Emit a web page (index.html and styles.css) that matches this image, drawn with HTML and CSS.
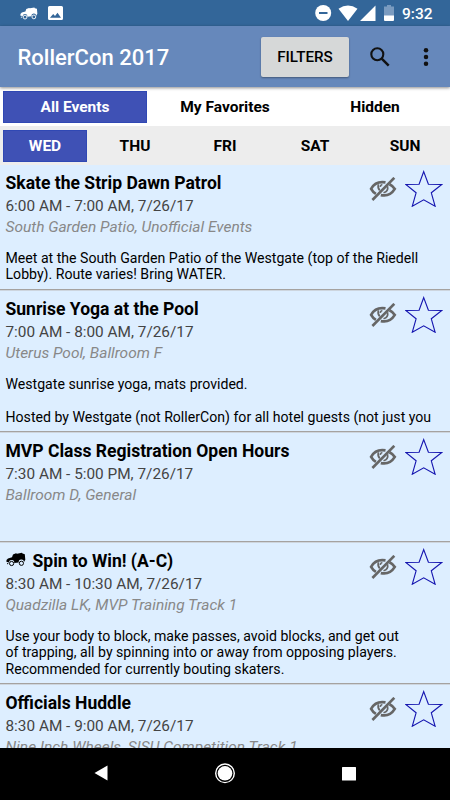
FILE: index.html
```
<!DOCTYPE html>
<html lang="en">
<head>
<meta charset="utf-8">
<title>RollerCon 2017</title>
<link rel="stylesheet" href="styles.css">
</head>
<body>
<svg class="defs" aria-hidden="true">
  <symbol id="skate" viewBox="0 0 20 14">
    <path fill="currentColor" d="M7 2 10 .8l1 .5 5-1 .5.8 2.300.7.5 5.500-1.300 2.200A2.600 2.600 0 0 0 12.700 10l-4.500.6A2.600 2.600 0 0 0 3 9.800L.5 9.500.5 7.500 2 6l4-1.200z"/>
    <g fill="none" stroke="currentColor" stroke-width="1"><circle cx="5.600" cy="11" r="2.100"/><circle cx="15.400" cy="10.800" r="2.100"/><path d="M2.500 10.500 1 11.500"/></g>
  </symbol>
  <symbol id="hide" viewBox="0 0 28 26">
    <g fill="none" stroke="#666">
      <path stroke-width="2.700" d="M16.500 5.400C9.500 4.200 4.500 7.500 2.100 11.800c1.200 2.200 2.800 3.800 4.800 5M20.500 7.200c2.300 1.200 4 2.800 5.300 4.700-3.200 5.200-8 7.500-14 6.200"/>
      <path stroke-width="1.700" d="M9.500 7.200c-.8 2.500-.3 4.700 1.200 6.200M18.500 9.200c.7 3-.9 5.600-4 6.500M11.200 9.800c.2-1.300 1-2.100 2.200-2.300"/>
      <path stroke-width="2.600" d="M3.400 23 25.300.8"/>
    </g>
  </symbol>
  <symbol id="star" viewBox="0 0 38 37">
    <path fill="none" stroke="#1515b0" stroke-width="1.150" d="m18.700 1.600 4.700 12.700 13.400.2-10.500 8.300 3.800 13.400-11.400-6.400-11.400 6.400 3.800-13.400L.8 14.500l13.300-.2z"/>
  </symbol>
</svg>
<div class="screen">
  <header class="status">
    <svg class="skate-status"><use href="#skate"/></svg>
    <svg class="photo" viewBox="0 0 15 14"><path fill="#fff" fill-rule="evenodd" d="M1.500 0h12Q15 0 15 1.500v11Q15 14 13.500 14h-12Q0 14 0 12.500v-11Q0 0 1.500 0zM2 11.800h11L9.500 6.700 7 10 5.200 8z"/></svg>
    <svg class="signals" viewBox="0 0 80 17">
      <circle cx="8.200" cy="8" r="8" fill="#fff"/><path d="M4 8h8.500" stroke="#336699" stroke-width="2"/>
      <path fill="#fff" d="M23.500 3.700Q33-2.500 42.500 3.700L33 16zM60.500 .5v15.500H45z"/>
      <path fill="#7a9bc0" d="M72 0h4v1.500h3V11H69V1.500h3z"/><path fill="#fff" d="M69 10.500h10V15q0 1-1 1h-8q-1 0-1-1z"/>
    </svg>
    <span class="clock">9:32</span>
  </header>
  <div class="toolbar">
    <h1>RollerCon 2017</h1>
    <button class="filters">FILTERS</button>
    <svg class="search" viewBox="0 0 20 20"><g fill="none" stroke="#111" stroke-width="2.100"><circle cx="7.300" cy="7.300" r="6"/><path stroke-width="2.500" d="m11.700 11.700 7 7"/></g></svg>
    <svg class="more" viewBox="0 0 6 18"><g fill="#111"><circle cx="3" cy="2.300" r="2.250"/><circle cx="3" cy="9" r="2.250"/><circle cx="3" cy="15.700" r="2.250"/></g></svg>
  </div>
  <nav class="tabs"><span class="tab active">All Events</span><span class="tab">My Favorites</span><span class="tab">Hidden</span></nav>
  <nav class="tabs days"><span class="tab active">WED</span><span class="tab">THU</span><span class="tab">FRI</span><span class="tab">SAT</span><span class="tab">SUN</span></nav>
  <main class="events">
    <article class="event">
      <div class="actions"><svg class="hide"><use href="#hide"/></svg><svg class="star"><use href="#star"/></svg></div>
      <h2>Skate the Strip Dawn Patrol</h2>
      <p class="time">6:00 AM - 7:00 AM, 7/26/17</p>
      <p class="place">South Garden Patio, Unofficial Events</p>
      <p class="desc">Meet at the South Garden Patio of the Westgate (top of the Riedell
Lobby). Route varies! Bring WATER.</p>
    </article>
    <article class="event tall">
      <div class="actions"><svg class="hide"><use href="#hide"/></svg><svg class="star"><use href="#star"/></svg></div>
      <h2>Sunrise Yoga at the Pool</h2>
      <p class="time">7:00 AM - 8:00 AM, 7/26/17</p>
      <p class="place">Uterus Pool, Ballroom F</p>
      <p class="desc">Westgate sunrise yoga, mats provided.

Hosted by Westgate (not RollerCon) for all hotel guests (not just you</p>
    </article>
    <article class="event short">
      <div class="actions"><svg class="hide"><use href="#hide"/></svg><svg class="star"><use href="#star"/></svg></div>
      <h2>MVP Class Registration Open Hours</h2>
      <p class="time">7:30 AM - 5:00 PM, 7/26/17</p>
      <p class="place">Ballroom D, General</p>
    </article>
    <article class="event tall">
      <div class="actions"><svg class="hide"><use href="#hide"/></svg><svg class="star"><use href="#star"/></svg></div>
      <h2><svg class="skate-title"><use href="#skate"/></svg>Spin to Win! (A-C)</h2>
      <p class="time">8:30 AM - 10:30 AM, 7/26/17</p>
      <p class="place">Quadzilla LK, MVP Training Track 1</p>
      <p class="desc">Use your body to block, make passes, avoid blocks, and get out
of trapping, all by spinning into or away from opposing players.
Recommended for currently bouting skaters.</p>
    </article>
    <article class="event">
      <div class="actions"><svg class="hide"><use href="#hide"/></svg><svg class="star"><use href="#star"/></svg></div>
      <h2>Officials Huddle</h2>
      <p class="time">8:30 AM - 9:00 AM, 7/26/17</p>
      <p class="place">Nine Inch Wheels, SISU Competition Track 1</p>
    </article>
  </main>
  <footer class="navbar">
    <svg viewBox="0 0 30 30"><path fill="#fff" d="M8.500 14 21.500 6.500v15z"/></svg>
    <svg viewBox="0 0 30 30"><circle cx="15" cy="14.300" r="9.300" fill="none" stroke="#fff" stroke-width="1.400"/><circle cx="15" cy="14.300" r="7.300" fill="#fff"/></svg>
    <svg viewBox="0 0 30 30"><rect x="8" y="8" width="14" height="13.500" rx=".5" fill="#fff"/></svg>
  </footer>
</div>
</body>
</html>
```
FILE: styles.css
```
* { box-sizing: border-box; }
body, h1, h2, p { margin: 0; }
body { font-family: Roboto, sans-serif; color: #000; }
.defs { position: absolute; width: 0; height: 0; }
.screen { width: 450px; height: 800px; display: flex; flex-direction: column; overflow: hidden; }
.status { height: 26px; flex: none; background: #336699; color: #fff; display: flex; align-items: flex-start; padding: 5px 17px 0 20px; }
.skate-status { width: 18px; height: 15px; margin-top: 1px; }
.photo { width: 15px; height: 14px; margin: 1px 0 0 10px; }
.signals { width: 80px; height: 17px; margin-left: auto; }
.clock { font-size: 15.5px; line-height: 18px; font-weight: 500; margin-left: 7px; width: 31px; white-space: nowrap; }
.toolbar { height: 61px; flex: none; background: #6688bb; display: flex; align-items: center; padding: 0 21px 0 17.5px; z-index: 1; box-shadow: 0 1px 3px rgba(0,0,0,.45); }
h1 { color: #fff; font-size: 22px; font-weight: 500; line-height: 28px; margin: 3px auto 0 0; white-space: nowrap; }
.filters { width: 88px; height: 40px; border: 0; border-radius: 2px; background: #d6d8d8; box-shadow: 0 1px 2px rgba(0,0,0,.35); font: 500 15.2px Roboto, sans-serif; color: #000; padding: 1px 0 0; }
.search { width: 20px; height: 20px; margin-left: 21px; }
.more { width: 6px; height: 18px; margin-left: 33px; }
.tabs { height: 39px; flex: none; display: flex; padding: 4px 0 3px; background: #fff; }
.tab { flex: 1; margin: 0 3px; display: flex; align-items: center; justify-content: center; font-size: 15.5px; font-weight: 700; white-space: nowrap; }
.tab.active { background: #3f51b5; color: #fff; box-shadow: inset 0 0 0 1px #3048b4; }
.days { background: #ededed; }
.events { height: 583px; flex: none; overflow: hidden; background: #ddeeff; }
.event { height: 125px; margin-bottom: 1px; position: relative; padding: 7px 5.500px 0; border-bottom: 1px solid #a5a2a0; box-shadow: 0 1px 0 #cdd5de; background: #ddeeff; }
.event.tall { height: 141px; }
.event.short { height: 109px; }
.actions { position: absolute; top: 5px; right: 7px; display: flex; align-items: flex-start; }
.hide { width: 28px; height: 26px; margin: 7px 8px 0 0; }
.star { width: 38px; height: 37px; }
h2 { font-size: 17.550px; line-height: 23px; font-weight: 700; white-space: nowrap; }
.skate-title { width: 20px; height: 15px; margin-right: 7px; }
.time { font-size: 15.350px; line-height: 22px; color: #444; white-space: nowrap; }
.place { font-size: 15.480px; line-height: 21px; color: #888; font-style: italic; white-space: nowrap; }
.desc { font-size: 14.120px; line-height: 16.600px; margin-top: 11.500px; white-space: pre; }
.navbar { height: 52px; flex: none; background: #000; display: flex; align-items: center; justify-content: center; gap: 94px; }
.navbar svg { width: 30px; height: 30px; }
```
